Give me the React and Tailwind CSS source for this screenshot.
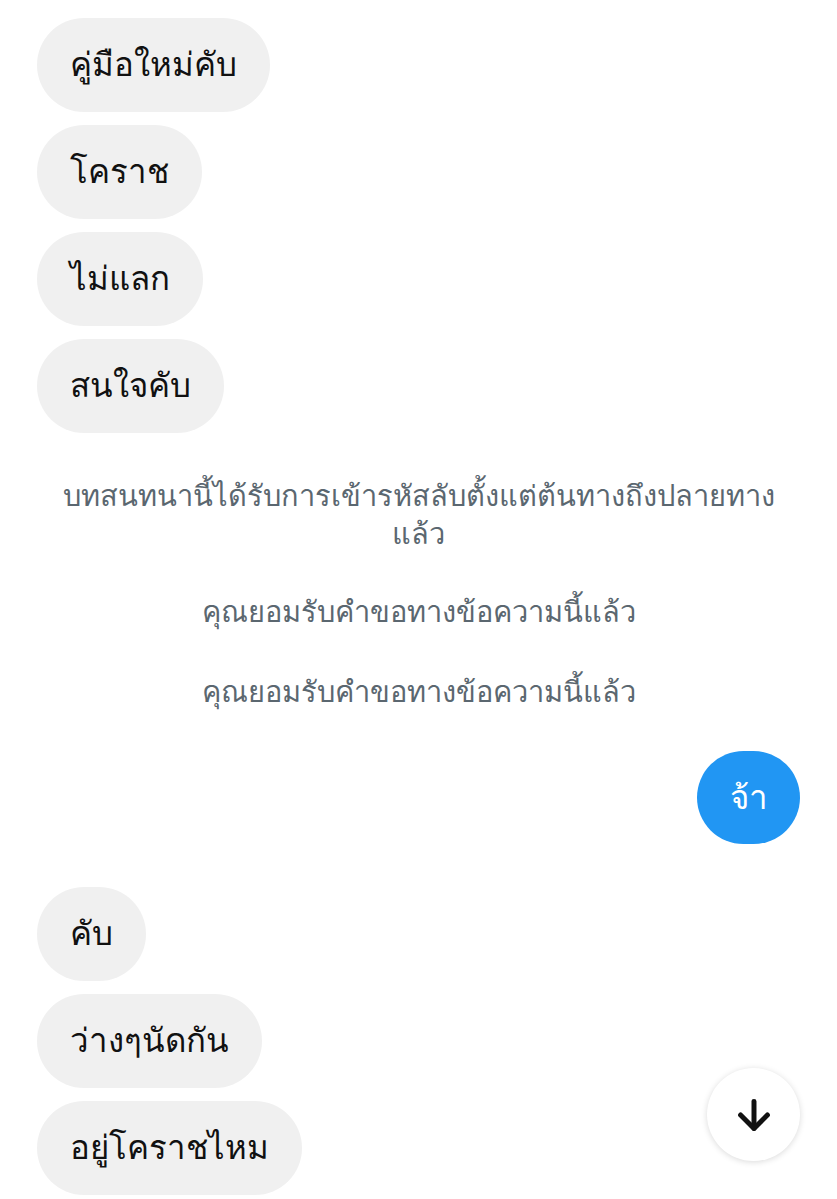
import { ArrowDown } from 'lucide-react';

const TOP = ['คู่มือใหม่คับ', 'โคราช', 'ไม่แลก', 'สนใจคับ'];
const BOTTOM = ['คับ', 'ว่างๆนัดกัน', 'อยู่โคราชไหม'];

function Bubble({ text }) {
  return (
    <div className="h-[94px] rounded-full bg-[#f0f0f0] px-[33px] flex items-center text-[33px] text-[#111]">
      {text}
    </div>
  );
}

export default function App() {
  return (
    <div
      className="relative w-[837px] h-[1199px] overflow-hidden bg-white"
      style={{ fontFamily: '"Liberation Sans", sans-serif' }}
    >
      <div className="flex flex-col items-start gap-[13px] pl-[37px] pt-[18px]">
        {TOP.map((t) => (
          <Bubble key={t} text={t} />
        ))}
      </div>

      <div className="mt-[44px] px-[40px] text-center text-[29px] leading-[38px] text-[#5b6770]">
        บทสนทนานี้ได้รับการเข้ารหัสลับตั้งแต่ต้นทางถึงปลายทางแล้ว
      </div>
      <div className="mt-[40px] text-center text-[29px] leading-[38px] text-[#5b6770]">
        คุณยอมรับคำขอทางข้อความนี้แล้ว
      </div>
      <div className="mt-[42px] text-center text-[29px] leading-[38px] text-[#5b6770]">
        คุณยอมรับคำขอทางข้อความนี้แล้ว
      </div>

      <div className="flex justify-end pr-[37px] mt-[40px]">
        <div className="h-[93px] min-w-[103px] rounded-full bg-[#2196f3] px-[28px] flex items-center justify-center text-[33px] text-white">
          จ้า
        </div>
      </div>

      <div className="flex flex-col items-start gap-[13px] pl-[37px] mt-[43px]">
        {BOTTOM.map((t) => (
          <Bubble key={t} text={t} />
        ))}
      </div>

      <button className="absolute left-[707px] top-[1068px] w-[93px] h-[93px] rounded-full bg-white shadow-[0_1px_6px_rgba(0,0,0,0.15)] flex items-center justify-center">
        <ArrowDown size={46} strokeWidth={2.6} color="#111" />
      </button>
    </div>
  );
}
